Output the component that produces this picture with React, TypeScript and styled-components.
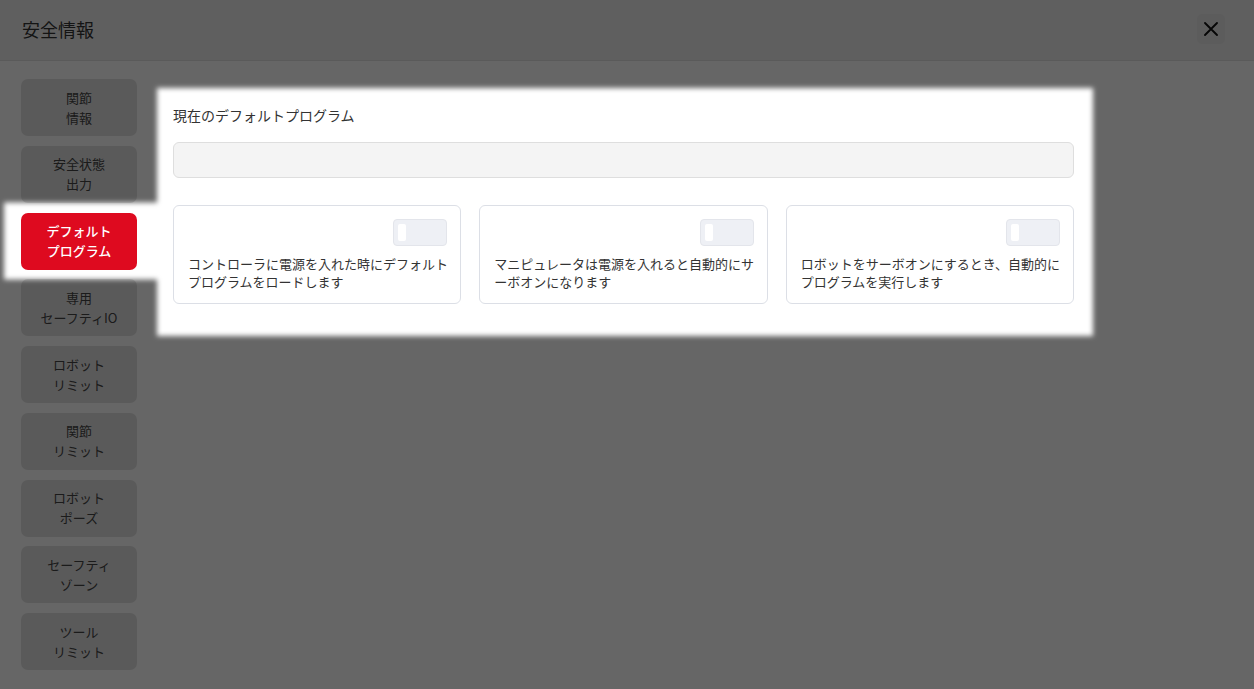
import React, { useLayoutEffect, useRef, useState } from 'react';
import styled, { createGlobalStyle } from 'styled-components';

const GlobalStyle = createGlobalStyle`
  html, body {
    margin: 0;
    padding: 0;
    background: #ffffff;
  }
  body {
    font-family: "Noto Sans CJK JP", "Noto Sans", sans-serif;
    color: #333;
  }
  * {
    box-sizing: border-box;
  }
`;

const Page = styled.div`
  position: relative;
  height: 100vh;
  overflow: hidden;
  display: flex;
  flex-direction: column;
`;

const Header = styled.header`
  height: 61px;
  flex-shrink: 0;
  display: flex;
  align-items: center;
  justify-content: space-between;
  padding: 0 29px 2px 22px;
  background: #eeeeee;
  border-bottom: 1px solid #e2e2e2;
`;

const Title = styled.h1`
  margin: 0;
  font-size: 18px;
  font-weight: 400;
  color: #333;
`;

const CloseButton = styled.button`
  width: 28px;
  height: 30px;
  padding: 0;
  border: none;
  border-radius: 5px;
  background: #e6e6e6;
  display: flex;
  align-items: center;
  justify-content: center;
  cursor: pointer;
`;

const Body = styled.div`
  flex: 1;
  display: flex;
  align-items: flex-start;
`;

const Sidebar = styled.nav`
  width: 157px;
  flex-shrink: 0;
  padding-top: 18px;
  display: flex;
  flex-direction: column;
  align-items: center;
  gap: 9.75px;
`;

const NavButton = styled.button<{ $active?: boolean }>`
  width: 116px;
  height: 57px;
  margin-left: 1px;
  border: none;
  border-radius: 7px;
  background: ${({ $active }) => ($active ? '#de0a1f' : '#e1e1e1')};
  color: ${({ $active }) => ($active ? '#ffffff' : '#444444')};
  font-family: inherit;
  font-size: 13px;
  font-weight: ${({ $active }) => ($active ? 500 : 400)};
  line-height: 20px;
  text-align: center;
  white-space: pre-line;
  cursor: pointer;
`;

const Panel = styled.section`
  width: 936px;
  margin-top: 27px;
  padding: 17px 19px 32px 16px;
  background: #ffffff;
`;

const Label = styled.div`
  font-size: 14px;
  line-height: 20px;
  color: #333;
`;

const ProgramField = styled.div`
  height: 36px;
  margin-top: 17px;
  border: 1px solid #dedede;
  border-radius: 6px;
  background: #f4f4f4;
`;

const CardGrid = styled.div`
  margin-top: 27px;
  display: grid;
  grid-template-columns: repeat(3, 1fr);
  gap: 18px;
`;

const Card = styled.div`
  height: 99px;
  padding: 13px 13px 12px 14px;
  border: 1px solid #dcdfe6;
  border-radius: 6px;
  display: flex;
  flex-direction: column;
`;

const Toggle = styled.div`
  align-self: flex-end;
  width: 54px;
  height: 29px;
  padding: 4px;
  border: 1px solid #e3e5eb;
  border-radius: 4px;
  background: #eef0f5;
`;

const Knob = styled.div`
  width: 8px;
  height: 100%;
  border-radius: 2px;
  background: #ffffff;
`;

const CardText = styled.p`
  margin: 9px -6px 0 0;
  font-size: 13px;
  line-height: 18px;
  color: #333;
  line-break: anywhere;
`;

const Overlay = styled.svg`
  position: absolute;
  inset: 0;
  width: 100%;
  height: 100%;
  pointer-events: none;
`;

type Hole = { x: number; y: number; w: number; h: number };

const navItems = [
  '関節\n情報',
  '安全状態\n出力',
  'デフォルト\nプログラム',
  '専用\nセーフティIO',
  'ロボット\nリミット',
  '関節\nリミット',
  'ロボット\nポーズ',
  'セーフティ\nゾーン',
  'ツール\nリミット',
];

const options = [
  'コントローラに電源を入れた時にデフォルトプログラムをロードします',
  'マニピュレータは電源を入れると自動的にサーボオンになります',
  'ロボットをサーボオンにするとき、自動的にプログラムを実行します',
];

const App: React.FC = () => {
  const activeIndex = 2;
  const panelRef = useRef<HTMLElement>(null);
  const activeRef = useRef<HTMLButtonElement>(null);
  const [holes, setHoles] = useState<Hole[]>([]);

  // spotlight holes follow the highlighted panel and the active nav button
  useLayoutEffect(() => {
    const panel = panelRef.current?.getBoundingClientRect();
    const btn = activeRef.current?.getBoundingClientRect();
    if (!panel || !btn) return;
    setHoles([
      { x: panel.left, y: panel.top, w: panel.width, h: panel.height },
      {
        x: btn.left - 17,
        y: btn.top - 10,
        w: panel.left - (btn.left - 17),
        h: btn.height + 20,
      },
    ]);
  }, []);

  return (
    <>
      <GlobalStyle />
      <Page>
        <Header>
          <Title>安全情報</Title>
          <CloseButton aria-label="close">
            <svg width="16" height="16" viewBox="0 0 16 16">
              <path d="M2 2 L14 14 M14 2 L2 14" stroke="#111" strokeWidth="1.9" strokeLinecap="round" />
            </svg>
          </CloseButton>
        </Header>
        <Body>
          <Sidebar>
            {navItems.map((item, i) => (
              <NavButton
                key={item}
                $active={i === activeIndex}
                ref={i === activeIndex ? activeRef : undefined}
              >
                {item}
              </NavButton>
            ))}
          </Sidebar>
          <Panel ref={panelRef}>
            <Label>現在のデフォルトプログラム</Label>
            <ProgramField />
            <CardGrid>
              {options.map((text) => (
                <Card key={text}>
                  <Toggle>
                    <Knob />
                  </Toggle>
                  <CardText>{text}</CardText>
                </Card>
              ))}
            </CardGrid>
          </Panel>
        </Body>

        <Overlay>
          <defs>
            <filter id="spot-blur" x="-20%" y="-20%" width="140%" height="140%">
              <feGaussianBlur stdDeviation="2.5" />
            </filter>
            <mask id="spot-mask">
              <rect x="0" y="0" width="100%" height="100%" fill="#fff" />
              <g filter="url(#spot-blur)">
                {holes.map((h, i) => (
                  <rect key={i} x={h.x} y={h.y} width={h.w} height={h.h} fill="#000" />
                ))}
              </g>
            </mask>
          </defs>
          <rect x="0" y="0" width="100%" height="100%" fill="rgba(0,0,0,0.6)" mask="url(#spot-mask)" />
        </Overlay>
      </Page>
    </>
  );
};

export default App;
